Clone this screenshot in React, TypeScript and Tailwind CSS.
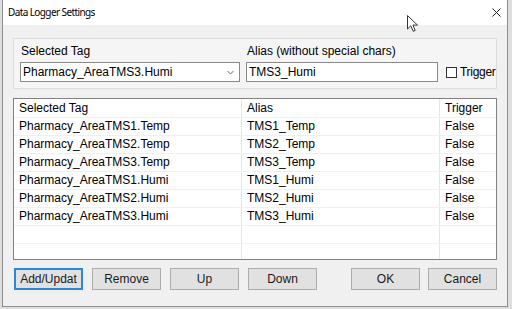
const rows = [
  ['Pharmacy_AreaTMS1.Temp', 'TMS1_Temp', 'False'],
  ['Pharmacy_AreaTMS2.Temp', 'TMS2_Temp', 'False'],
  ['Pharmacy_AreaTMS3.Temp', 'TMS3_Temp', 'False'],
  ['Pharmacy_AreaTMS1.Humi', 'TMS1_Humi', 'False'],
  ['Pharmacy_AreaTMS2.Humi', 'TMS2_Humi', 'False'],
  ['Pharmacy_AreaTMS3.Humi', 'TMS3_Humi', 'False'],
  ['', '', ''],
  ['', '', ''],
]

function Button({ label, focused }: { label: string; focused?: boolean }) {
  return (
    <button
      className={
        'w-[69px] h-[22px] bg-[#e1e1e1] text-[12px] leading-[18px] text-[#1a1a1a] ' +
        (focused ? 'border-2 border-[#2f86d4]' : 'border border-[#adadad]')
      }
    >
      {label}
    </button>
  )
}

export default function App() {
  return (
    <div className="w-[512px] h-[309px] bg-[#dedede] overflow-hidden relative font-['Liberation_Sans',Arial,sans-serif]">
      {/* Window */}
      <div className="ml-[2px] w-[506px] h-[307px] border-x border-b border-[#8e8e8e] bg-[#f0f0f0] flex flex-col">
        {/* Title bar */}
        <div className="h-[25px] bg-white flex items-center justify-between pl-[5px] pr-[6px]">
          <span className="font-['Noto_Sans',sans-serif] text-[10px] tracking-[-0.6px] text-black">Data Logger Settings</span>
          <svg width="9" height="9" viewBox="0 0 9 9" className="mb-[1px]">
            <path d="M0.5 0.5 L8.5 8.5 M8.5 0.5 L0.5 8.5" stroke="#222" strokeWidth="1" />
          </svg>
        </div>

        {/* Body */}
        <div className="flex flex-col px-[10px] pt-[13px]">
          {/* Input group */}
          <div className="h-[51px] border border-[#dcdcdc] bg-[#f5f5f5] flex items-start pl-[6px] pt-[4px] text-[12px] text-black">
            <div className="w-[220px] shrink-0 flex flex-col">
              <div className="h-[16px] leading-[16px] pl-[1px]">Selected Tag</div>
              <div className="mt-[3px] h-[20px] border border-[#8a8a8a] bg-white flex items-center justify-between pl-[2px] pr-[5px] leading-[18px]">
                <span>Pharmacy_AreaTMS3.Humi</span>
                <svg width="7" height="5" viewBox="0 0 7 5">
                  <path d="M0.5 1 L3.5 4 L6.5 1" fill="none" stroke="#6a6a6a" strokeWidth="1" />
                </svg>
              </div>
            </div>
            <div className="ml-[6px] w-[192px] shrink-0 flex flex-col">
              <div className="h-[16px] leading-[16px] pl-[1px]">Alias (without special chars)</div>
              <div className="mt-[3px] h-[20px] border border-[#8a8a8a] bg-white pl-[2px] leading-[18px]">TMS3_Humi</div>
            </div>
            <div className="ml-[8px] mt-[19px] h-[20px] shrink-0 flex items-center">
              <div className="w-[11px] h-[11px] border border-[#333] bg-white" />
              <span className="ml-[3px] leading-[18px] tracking-[-0.3px]">Trigger</span>
            </div>
          </div>

          {/* List view */}
          <div className="mt-[9px] h-[162px] border border-[#828282] bg-white overflow-hidden text-[12px] text-black">
            <div className="h-[19px] leading-[19px] flex border-b border-[#f0f0f0]">
              <div className="w-[228px] pl-[5px] border-r border-[#e5e5e5]">Selected Tag</div>
              <div className="w-[198px] pl-[5px] border-r border-[#e5e5e5]">Alias</div>
              <div className="flex-1 pl-[5px]">Trigger</div>
            </div>
            {rows.map((r, i) => (
              <div key={i} className="h-[18px] leading-[17px] flex border-b border-[#f0f0f0]">
                <div className="w-[228px] pl-[5px] border-r border-[#e5e5e5]">{r[0]}</div>
                <div className="w-[198px] pl-[5px] border-r border-[#e5e5e5]">{r[1]}</div>
                <div className="flex-1 pl-[5px]">{r[2]}</div>
              </div>
            ))}
          </div>

          {/* Buttons */}
          <div className="mt-[8px] flex pl-[1px]">
            <div className="flex gap-[9px]">
              <Button label="Add/Updat" focused />
              <Button label="Remove" />
              <Button label="Up" />
              <Button label="Down" />
            </div>
            <div className="ml-[34px] flex gap-[8px]">
              <Button label="OK" />
              <Button label="Cancel" />
            </div>
          </div>
        </div>
      </div>

      {/* Mouse cursor */}
      <svg className="absolute left-[407px] top-[15px]" width="12" height="18" viewBox="0 0 12 18">
        <path d="M0.5 0.5 L0.5 14 L3.8 10.8 L6.2 16.3 L8.2 15.4 L5.9 10.1 L10.5 10.1 Z" fill="white" stroke="#333" strokeWidth="1" strokeLinejoin="round" />
      </svg>
    </div>
  )
}
